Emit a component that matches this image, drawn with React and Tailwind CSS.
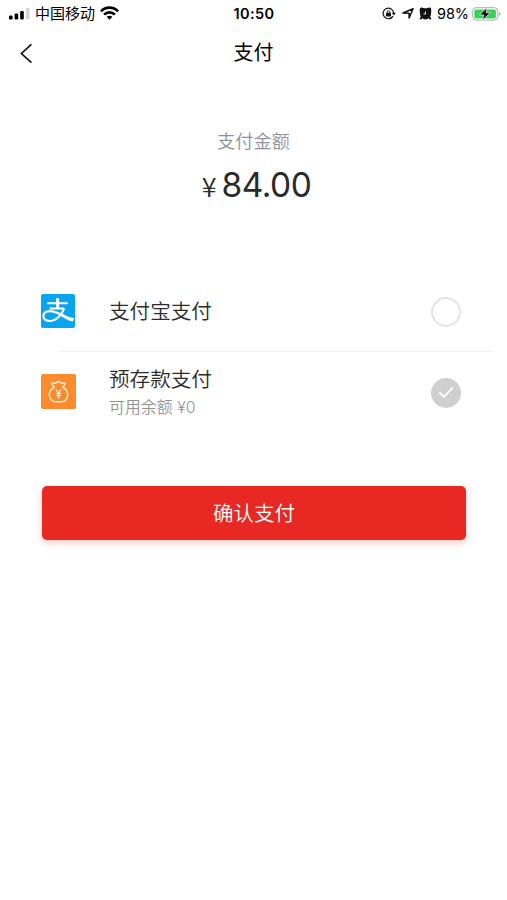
const cjk = 'font-["Inter","Noto_Sans_CJK_SC",sans-serif]';

function Signal() {
  return (
    <svg width="21" height="12" viewBox="0 0 21 12">
      <rect x="0" y="7.5" width="3.6" height="4" rx="1.2" />
      <rect x="5.6" y="5.5" width="3.6" height="6" rx="1.2" />
      <rect x="11.2" y="3" width="3.6" height="8.5" rx="1.2" />
      <rect x="16.8" y="0" width="3.8" height="11.5" rx="1.2" fill="#d6d6d6" />
    </svg>
  );
}

function Wifi() {
  return (
    <svg className="-mt-0.5" width="19" height="14" viewBox="0 0 18 13" fill="none" stroke="#000" strokeWidth="2.5">
      <path d="M.9 4.9C5.4.3 12.6.3 17.1 4.9" />
      <path d="M3.9 8c2.9-2.8 7.3-2.8 10.2 0" />
      <path d="M6.3 10.1c1.6-1.3 3.8-1.3 5.4 0L9 12.9z" fill="#000" stroke="none" />
    </svg>
  );
}

function RotationLock() {
  return (
    <svg width="14" height="13" viewBox="0 0 14 13" fill="none" stroke="#111" strokeWidth="1.2">
      <path d="M11 9.1A5.3 5.3 0 1 1 11.7 6" />
      <path d="M9.7 5.8h4.2l-2.1 2.6z" fill="#111" stroke="none" />
      <rect x="4" y="5.8" width="5" height="3.6" rx=".6" fill="#111" stroke="none" />
      <path d="M5.2 6V4.9a1.3 1.3 0 0 1 2.6 0V6" strokeWidth=".9" />
    </svg>
  );
}

function Location() {
  return (
    <svg width="12" height="11" viewBox="0 0 12 11" fill="none" stroke="#111" strokeWidth="1.5" strokeLinejoin="round">
      <path d="M11.1.8 7.1 10V5.2L1 5z" />
    </svg>
  );
}

function Alarm() {
  return (
    <svg width="13" height="13" viewBox="0 0 13 13">
      <circle cx="6.5" cy="6.9" r="5.5" fill="#111" />
      <path d="M.8 6V2.2C.8 1.2 1.7.6 2.7.6c1.4 0 1.9.8 3.800.8s2.400-.8 3.800-.8c1 0 1.900.6 1.900 1.600V6z" fill="#111" />
      <path d="m2.600 10.300-.9 1.300M10.400 10.300l.9 1.300" stroke="#111" strokeWidth="1.9" strokeLinecap="round" />
      <path d="M6.500 4.500v2.500H4.500" stroke="#fff" strokeWidth="1" fill="none" />
    </svg>
  );
}

function Battery() {
  return (
    <svg width="30" height="14" viewBox="0 0 30 14">
      <rect x=".6" y=".7" width="25.3" height="12.4" rx="3.6" fill="#fff" stroke="#aaa" />
      <rect x="2.3" y="2.4" width="21.6" height="9" rx="2" fill="#36d158" />
      <path d="M27.3 4.7c1.7.8 1.7 3.7 0 4.5z" fill="#aaa" />
      <path d="M14.900.5 7.600 7.900h4.200l-1.200 5.600 7.700-7.900h-4.200z" fill="#111" stroke="#fff" strokeWidth=".7" />
    </svg>
  );
}

function AlipayIcon() {
  return (
    <svg width="34" height="34" viewBox="0 0 34 34">
      <rect width="34" height="34" rx="2" fill="#08a5ee" />
      <g fill="none" stroke="#fff">
        <path d="M6.3 9.2h20.500M8.600 14.500h14.500" strokeWidth="1.9" />
        <path d="M16.600 4.200v10" strokeWidth="3" />
        <path
          d="M23.200 14.400C20.800 20.800 15.400 27 8.700 27c-4 0-6.300-2-6.300-4.800 0-3.200 2.700-5.100 6.300-5.100 5 0 9.500 2.300 14.500 4.900"
          strokeWidth="2.1"
        />
      </g>
      <path d="M20.800 19.700c4 2.100 8 3.500 12.400 4.400l-1.300 3.500c-4.500-1-8.400-3.200-12.100-5.600z" fill="#fff" />
    </svg>
  );
}

function DepositIcon() {
  return (
    <svg className="-mt-0.5" width="35" height="35" viewBox="0 0 35 35">
      <rect width="35" height="35" rx="2" fill="#fb8b2c" />
      <g fill="none" stroke="#ffead2" strokeWidth="1.5" strokeLinecap="round" strokeLinejoin="round">
        <path d="M13.400 13c-1.300-1.200-3-2.800-2.400-3.800.5-.8 2.200.2 3.400 0 1.100-.2 1.900-1.600 3.100-1.600s2 1.400 3.100 1.600c1.200.2 2.900-.8 3.400 0 .6 1-1.100 2.600-2.400 3.800 3.200 1.700 5.100 4.400 5.100 7.700 0 4.700-3.500 7.300-9.200 7.300s-9.200-2.600-9.200-7.300c0-3.300 1.900-6 5.100-7.700z" />
        <path d="m15.400 15.800 2.100 3.200 2.100-3.200M17.500 19v5.300M15.500 19.400h4M15.500 21.600h4" strokeWidth="1.3" />
      </g>
    </svg>
  );
}

function StatusBar() {
  return (
    <div className="grid h-7 grid-cols-3 items-center pr-[5px] pl-[9px] text-black">
      <div className="flex items-center">
        <Signal />
        <span className="ml-[5px] text-[15px] leading-7">中国移动</span>
        <span className="ml-[5px]"><Wifi /></span>
      </div>
      <div className="pr-[3px] text-center text-[14.5px] leading-7 font-semibold tracking-[0.4px]">10:50</div>
      <div className="flex items-center justify-end">
        <span className="-mt-px"><RotationLock /></span>
        <span className="-mt-px ml-[6px]"><Location /></span>
        <span className="-mt-px ml-[5px]"><Alarm /></span>
        <span className="ml-[5px] text-[14.5px] leading-7 tracking-[-0.1px]">98%</span>
        <span className="-mt-px ml-[3px]"><Battery /></span>
      </div>
    </div>
  );
}

function PayOption({ icon, title, note, checked }) {
  return (
    <div className="flex h-20 items-center pr-[46px] pl-[41px]">
      <div className="w-[68px]">{icon}</div>
      <div className="flex-1 pt-0.5">
        <div className="text-[20.6px] leading-[30px] font-[350] text-[#2c2c2c]">{title}</div>
        {note && <div className="text-[15.8px] leading-[26px] font-[350] tracking-[0.1px] text-[#929296]">{note}</div>}
      </div>
      {checked ? (
        <div className="mt-px flex size-[30px] items-center justify-center rounded-full bg-[#cfcfcf]">
          <svg width="16" height="13" viewBox="0 0 16 13" fill="none" stroke="#fff" strokeWidth="1.9">
            <path d="m1.3 6.3 4.5 4.5L14.7 1.7" />
          </svg>
        </div>
      ) : (
        <div className="mt-0.5 size-[30px] rounded-full border-2 border-[#e4e4e4]" />
      )}
    </div>
  );
}

export default function App() {
  return (
    <div className={`min-h-screen w-full bg-white ${cjk}`}>
      <StatusBar />
      <header className="grid h-12 grid-cols-3 items-center pt-0.5 text-black">
        <svg className="ml-5" width="13" height="21" viewBox="0 0 14 22" fill="none" stroke="#111" strokeWidth="1.8">
          <path d="M12.3 1.2 1.5 11l10.8 9.8" />
        </svg>
        <h1 className="text-center text-[20px] leading-8">支付</h1>
      </header>

      <section className="flex flex-col items-center pt-[50px]">
        <div className="text-[18.2px] leading-[30px] font-[350] text-[#929296]">支付金额</div>
        <div className="mt-[9px] flex h-10 items-baseline pl-[6px] text-[#2a2a2a]">
          <span className='font-["Noto_Sans_CJK_SC",sans-serif] text-[27px] leading-10 font-[350]'>¥</span>
          <span className="ml-[5px] text-[33.5px] leading-10 font-[370] tracking-[-0.5px]">84.00</span>
        </div>
      </section>

      <section className="mt-[66px]">
        <PayOption icon={<AlipayIcon />} title="支付宝支付" />
        <div className="mr-[15px] ml-[60px] h-px bg-[#f0f0f0]" />
        <PayOption icon={<DepositIcon />} title="预存款支付" note="可用余额 ¥0" checked />
      </section>

      <div className="pt-[54px] pr-[41px] pl-[42px]">
        <button className="h-[54px] w-full rounded-[5px] bg-[#e82823] pt-[3px] text-[20.5px] font-[350] text-white shadow-[0_3px_6px_rgba(232,40,35,0.25)]">
          确认支付
        </button>
      </div>
    </div>
  );
}
